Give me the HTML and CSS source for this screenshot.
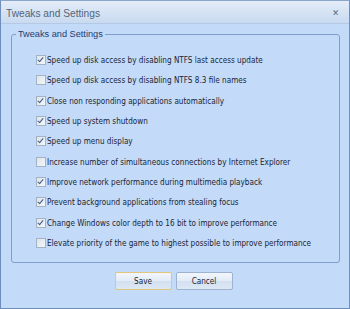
FILE: index.html
```html
<!DOCTYPE html>
<html>
<head>
<meta charset="utf-8">
<link rel="stylesheet" href="styles.css">
</head>
<body>
<div class="window">
  <div class="titlebar">
    <span class="title">Tweaks and Settings</span>
    <span class="close">&#x2715;</span>
  </div>
  <div class="body">
    <fieldset class="group">
      <legend>Tweaks and Settings</legend>
      <label class="row"><span class="cb on"></span>Speed up disk access by disabling NTFS last access update</label>
      <label class="row"><span class="cb"></span>Speed up disk access by disabling NTFS 8.3 file names</label>
      <label class="row"><span class="cb on"></span>Close non responding applications automatically</label>
      <label class="row"><span class="cb on"></span>Speed up system shutdown</label>
      <label class="row"><span class="cb on"></span>Speed up menu display</label>
      <label class="row"><span class="cb"></span>Increase number of simultaneous connections by Internet Explorer</label>
      <label class="row"><span class="cb on"></span>Improve network performance during multimedia playback</label>
      <label class="row"><span class="cb on"></span>Prevent background applications from stealing focus</label>
      <label class="row"><span class="cb on"></span>Change Windows color depth to 16 bit to improve performance</label>
      <label class="row"><span class="cb"></span>Elevate priority of the game to highest possible to improve performance</label>
    </fieldset>
    <div class="buttons">
      <button class="btn default">Save</button>
      <button class="btn">Cancel</button>
    </div>
  </div>
</div>
</body>
</html>
```
FILE: styles.css
```css
html, body {
  margin: 0;
  padding: 0;
  width: 350px;
  height: 309px;
  overflow: hidden;
  font-family: "DejaVu Sans Condensed", "DejaVu Sans", sans-serif;
  font-stretch: condensed;
}
.window {
  width: 350px;
  height: 309px;
  box-sizing: border-box;
  border: 1px solid #6d8dbb;
  border-top-color: #8aa6cc;
  background: #c3dbf9;
  display: flex;
  flex-direction: column;
}
.titlebar {
  height: 22px;
  flex: none;
  background: linear-gradient(#e4edf8, #d5e3f4 50%, #c9daf0);
  border-bottom: 1px solid #b3c9e6;
  display: flex;
  align-items: center;
  justify-content: space-between;
  padding: 0 10px 0 5px;
}
.title {
  font-family: "Liberation Sans", sans-serif;
  font-size: 10.2px;
  color: #55647a;
  margin-top: 2px;
}
.close {
  font-family: "DejaVu Sans", sans-serif;
  font-size: 9px;
  color: #5b6b80;
  margin-top: 2px;
}
.body {
  flex: 1;
  display: flex;
  flex-direction: column;
  padding: 5px 9px 0 10px;
}
.group {
  margin: 0;
  height: 234px;
  box-sizing: border-box;
  border: 1px solid #7e9fcb;
  border-radius: 3px;
  padding: 11px 0 0 24px;
  display: flex;
  flex-direction: column;
}
.group legend {
  font-family: "Liberation Sans", sans-serif;
  font-size: 9.2px;
  color: #1e3d6e;
  padding: 0 2px;
  margin-left: -20px;
}
.row {
  height: 20.3px;
  display: flex;
  align-items: center;
  font-size: 8.1px;
  color: #1b2433;
  white-space: nowrap;
}
.cb {
  width: 8px;
  height: 8px;
  flex: none;
  margin-right: 1px;
  border: 1px solid #a3b3c6;
  background: linear-gradient(135deg, #dfe4ea, #f4f6f8);
  position: relative;
}
.cb.on::after {
  content: "";
  position: absolute;
  left: 2px;
  top: 0px;
  width: 2px;
  height: 5px;
  border: solid #3d5b86;
  border-width: 0 1.5px 1.5px 0;
  transform: rotate(40deg);
}
.buttons {
  display: flex;
  justify-content: center;
  gap: 4px;
  margin-top: 9px;
  padding-right: 4px;
}
.btn {
  width: 57px;
  height: 18px;
  font-family: "DejaVu Sans Condensed", "DejaVu Sans", sans-serif;
  font-stretch: condensed;
  font-size: 8.1px;
  color: #1b2433;
  border: 1px solid #9db3d0;
  border-radius: 2px;
  background: linear-gradient(#f3f7fc, #e2ebf6 50%, #d3e0f0 51%, #dde8f5);
  padding: 0;
}
.btn.default {
  border-color: #e2c77a;
}
```
